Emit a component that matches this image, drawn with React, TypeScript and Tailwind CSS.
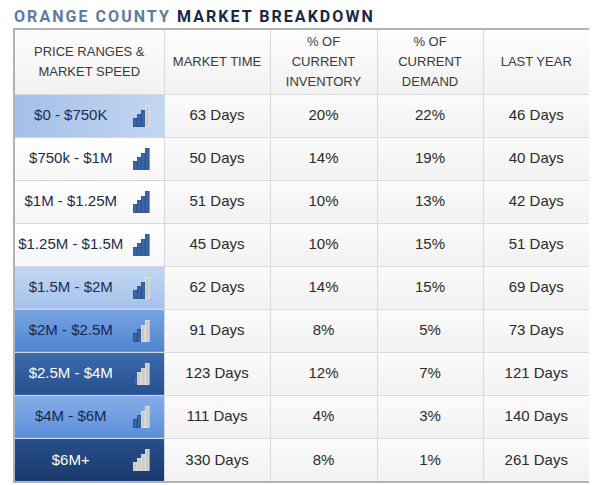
import React from "react";

type Row = {
  range: string;
  time: string;
  inv: string;
  dem: string;
  last: string;
  blue: number;
  bg: string;
  text: string;
};

const rows: Row[] = [
  { range: "$0 - $750K", time: "63 Days", inv: "20%", dem: "22%", last: "46 Days", blue: 3, bg: "bg-gradient-to-r from-[#a3bfe8] to-[#c3d6f1]", text: "text-[#1c2d4d]" },
  { range: "$750k - $1M", time: "50 Days", inv: "14%", dem: "19%", last: "40 Days", blue: 4, bg: "bg-gradient-to-b from-[#ffffff] to-[#f6f6f6]", text: "text-[#1c2d4d]" },
  { range: "$1M - $1.25M", time: "51 Days", inv: "10%", dem: "13%", last: "42 Days", blue: 4, bg: "bg-gradient-to-b from-[#ffffff] to-[#f6f6f6]", text: "text-[#1c2d4d]" },
  { range: "$1.25M - $1.5M", time: "45 Days", inv: "10%", dem: "15%", last: "51 Days", blue: 4, bg: "bg-gradient-to-b from-[#ffffff] to-[#f6f6f6]", text: "text-[#1c2d4d]" },
  { range: "$1.5M - $2M", time: "62 Days", inv: "14%", dem: "15%", last: "69 Days", blue: 3, bg: "bg-gradient-to-b from-[#c2d6f1] to-[#a6c2ea]", text: "text-[#1c2d4d]" },
  { range: "$2M - $2.5M", time: "91 Days", inv: "8%", dem: "5%", last: "73 Days", blue: 2, bg: "bg-gradient-to-b from-[#78a3e2] to-[#4f84d0]", text: "text-[#14284f]" },
  { range: "$2.5M - $4M", time: "123 Days", inv: "12%", dem: "7%", last: "121 Days", blue: 1, bg: "bg-gradient-to-b from-[#3c6aab] to-[#27518f]", text: "text-white" },
  { range: "$4M - $6M", time: "111 Days", inv: "4%", dem: "3%", last: "140 Days", blue: 2, bg: "bg-gradient-to-b from-[#86aee7] to-[#5a8ed8]", text: "text-[#14284f]" },
  { range: "$6M+", time: "330 Days", inv: "8%", dem: "1%", last: "261 Days", blue: 0, bg: "bg-gradient-to-b from-[#29508a] to-[#1a3a6c]", text: "text-white" },
];

function Bars({ blue }: { blue: number }) {
  const heights = [8, 12, 16, 21];
  return (
    <svg width="17" height="22" viewBox="0 0 17 22" className="block shrink-0">
      {heights.map((h, i) => {
        const isBlue = i < blue;
        return (
          <rect
            key={i}
            x={0.5 + i * 4}
            y={21.5 - h}
            width={3.6}
            height={h}
            fill={isBlue ? "#3b66a6" : "#c9c9c6"}
            stroke={isBlue ? "#254a85" : "#e8e8e4"}
            strokeWidth={0.8}
          />
        );
      })}
    </svg>
  );
}

export default function App() {
  const cell =
    "border border-[#d9d9d9] bg-gradient-to-b from-[#fbfbfb] to-[#f1f1f1] text-center text-[15px] text-[#2b2b2b]";
  const head =
    "border border-[#d9d9d9] bg-gradient-to-b from-[#fdfdfd] to-[#f1f1f1] text-center text-[13px] leading-[20px] text-[#3a3a3a] font-normal";
  return (
    <div className="w-[600px] h-[485px] bg-white overflow-hidden" style={{ fontFamily: '"Liberation Sans", Arial, sans-serif' }}>
      <div
        className="pl-[14px] pt-[7px] h-[28px] text-[16px] font-bold tracking-[2.05px] leading-[20px]"
        style={{ fontFamily: 'Roboto, "Liberation Sans", sans-serif' }}
      >
        <span className="text-[#5b7ba3]">ORANGE COUNTY </span>
        <span className="text-[#17284a]">MARKET BREAKDOWN</span>
      </div>
      <div className="ml-[13px] w-[576px] border-2 border-[#b3b3b3]">
        <table className="w-full border-collapse table-fixed">
          <colgroup>
            <col className="w-[149px]" />
            <col className="w-[106px]" />
            <col className="w-[107px]" />
            <col className="w-[106px]" />
            <col className="w-[106px]" />
          </colgroup>
          <thead>
            <tr className="h-[64px]">
              <th className={`${head} border-t-0 border-l-0`}>
                PRICE RANGES &amp;
                <br />
                MARKET SPEED
              </th>
              <th className={`${head} border-t-0`}>MARKET TIME</th>
              <th className={`${head} border-t-0`}>
                % OF
                <br />
                CURRENT
                <br />
                INVENTORY
              </th>
              <th className={`${head} border-t-0`}>
                % OF
                <br />
                CURRENT
                <br />
                DEMAND
              </th>
              <th className={`${head} border-t-0 border-r-0`}>LAST YEAR</th>
            </tr>
          </thead>
          <tbody>
            {rows.map((r, i) => {
              const last = i === rows.length - 1;
              return (
                <tr key={r.range} className="h-[43px]">
                  <td className={`border border-[#d0d8e4] border-l-0 ${last ? "border-b-0" : ""} ${r.bg} ${r.text} p-0`}>
                    <div className="flex items-center pl-0 pr-[14px]">
                      <span className="flex-1 min-w-0 text-center text-[15px] whitespace-nowrap">{r.range}</span>
                      <span className="ml-[6px] shrink-0 flex items-center">
                        <Bars blue={r.blue} />
                      </span>
                    </div>
                  </td>
                  <td className={`${cell} ${last ? "border-b-0" : ""}`}>{r.time}</td>
                  <td className={`${cell} ${last ? "border-b-0" : ""}`}>{r.inv}</td>
                  <td className={`${cell} ${last ? "border-b-0" : ""}`}>{r.dem}</td>
                  <td className={`${cell} border-r-0 ${last ? "border-b-0" : ""}`}>{r.last}</td>
                </tr>
              );
            })}
          </tbody>
        </table>
      </div>
    </div>
  );
}
